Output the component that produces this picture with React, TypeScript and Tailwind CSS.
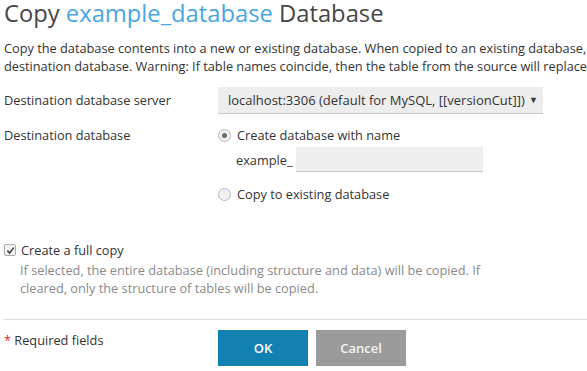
import type { ReactNode } from 'react'

function Radio({ checked, children }: { checked?: boolean; children: ReactNode }) {
  return (
    <label className="flex items-center gap-[6px] h-[18px]">
      <span className="flex h-[13px] w-[13px] items-center justify-center rounded-full border border-[#b9b9b9] bg-[#f1f1f1]">
        {checked && <span className="h-[5px] w-[5px] rounded-full bg-[#6b6b6b]" />}
      </span>
      <span>{children}</span>
    </label>
  )
}

function Checkbox() {
  return (
    <span className="flex h-[12px] w-[12px] items-center justify-center rounded-[2px] border border-[#a9a9a9] bg-[#f3f3f3]">
      <svg viewBox="0 0 10 10" className="h-[9px] w-[9px]">
        <path d="M1.5 5.2 L4 7.8 L8.6 1.8" fill="none" stroke="#444" strokeWidth="1.8" />
      </svg>
    </span>
  )
}

export default function App() {
  return (
    <div className="h-[371px] w-[587px] overflow-hidden bg-white pl-1 font-['Open_Sans',sans-serif] text-[12.75px] leading-[18px] text-[#333]">
      <h1 className="-mt-[3px] text-[23.75px] leading-[32px] whitespace-nowrap text-[#464646]">
        Copy <span className="text-[#47a6e2]">example_database</span> Database
      </h1>

      <p className="mt-[10px] whitespace-nowrap">
        Copy the database contents into a new or existing database. When copied to an existing database, the data will be copied into the
        <br />
        destination database. Warning: If table names coincide, then the table from the source will replace the table in the destination database.
      </p>

      <div className="mt-[12px] grid grid-cols-[214px_325px] items-start gap-y-[12px]">
        <div className="leading-[27px]">Destination database server</div>
        <div className="flex h-[27px] items-center justify-between border-b border-[#c8c8c8] bg-[#ededed] pl-[10px] pr-[5px] text-[13px]">
          <span>localhost:3306 (default for MySQL, [[versionCut]])</span>
          <span className="text-[9px] text-[#333]">▼</span>
        </div>

        <div className="leading-[18px]">Destination database</div>
        <div className="flex flex-col">
          <Radio checked>Create database with name</Radio>
          <div className="mt-[3px] flex items-center pl-[18px]">
            <span className="w-[60px]">example_</span>
            <span className="h-[25px] w-[187px] border-b border-[#c8c8c8] bg-[#eeeeee]" />
          </div>
          <div className="mt-[13px]">
            <Radio>Copy to existing database</Radio>
          </div>
        </div>
      </div>

      <div className="mt-[38px] flex items-center gap-[5px]">
        <Checkbox />
        <span>Create a full copy</span>
      </div>
      <p className="mt-[2px] pl-[16px] text-[#8a8a8a]">
        If selected, the entire database (including structure and data) will be copied. If
        <br />
        cleared, only the structure of tables will be copied.
      </p>

      <div className="mt-[22px] border-t border-[#dcdcdc]" />

      <div className="mt-[10px] grid grid-cols-[214px_1fr]">
        <div className="pt-[1px]">
          <span className="text-[#e02020]">*</span> Required fields
        </div>
        <div className="flex gap-[8px]">
          <button className="h-[36px] w-[90px] bg-[#1380b2] text-[13px] font-semibold text-white">OK</button>
          <button className="h-[36px] w-[90px] bg-[#9b9b9b] text-[13px] font-semibold text-[#f4f4f4]">Cancel</button>
        </div>
      </div>
    </div>
  )
}
